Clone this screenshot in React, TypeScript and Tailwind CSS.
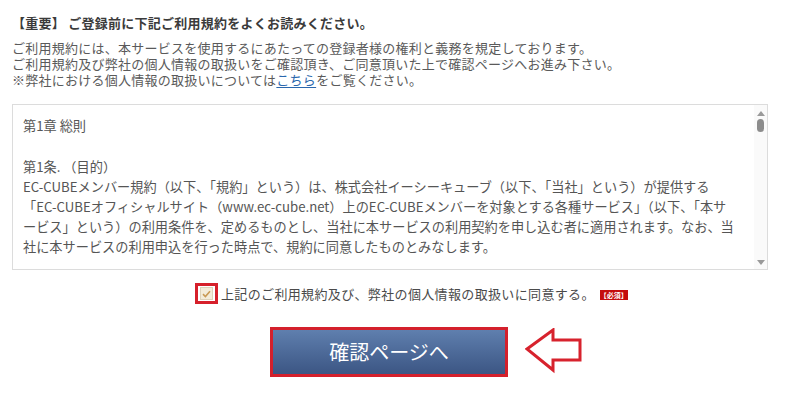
import React from 'react';

const font = { fontFamily: '"Noto Sans CJK JP", "Noto Sans", sans-serif' };

const termsLines = [
  'EC-CUBEメンバー規約（以下、「規約」という）は、株式会社イーシーキューブ（以下、「当社」という）が提供する',
  '「EC-CUBEオフィシャルサイト（www.ec-cube.net）上のEC-CUBEメンバーを対象とする各種サービス」（以下、「本サ',
  'ービス」という）の利用条件を、定めるものとし、当社に本サービスの利用契約を申し込む者に適用されます。なお、当',
  '社に本サービスの利用申込を行った時点で、規約に同意したものとみなします。',
];

const ArrowLeft: React.FC = () => (
  <svg width="58" height="46" viewBox="0 0 58 46" className="absolute left-full top-[1px] ml-[17px]">
    <polygon
      points="2,21 28,2 28,12 55,12 55,32 28,32 28,42"
      fill="white"
      stroke="#d7222d"
      strokeWidth="3"
    />
  </svg>
);

const App: React.FC = () => {
  return (
    <div className="w-[800px] h-[401px] bg-white overflow-hidden" style={font}>
      <div className="w-[756px] ml-[12px] pt-[15px] flex flex-col">
        {/* notice */}
        <h2 className="text-[13px] leading-[16px] font-bold tracking-[0.25px] text-[#3b3b3b]">
          【重要】 ご登録前に下記ご利用規約をよくお読みください。
        </h2>
        <div className="mt-[9px] text-[13px] leading-[16px] tracking-[0.25px] text-[#5a5a5a]">
          <p>ご利用規約には、本サービスを使用するにあたっての登録者様の権利と義務を規定しております。</p>
          <p>ご利用規約及び弊社の個人情報の取扱いをご確認頂き、ご同意頂いた上で確認ページへお進み下さい。</p>
          <p>
            ※弊社における個人情報の取扱いについては
            <a className="text-[#2a67ad] underline underline-offset-2">こちら</a>
            をご覧ください。
          </p>
        </div>

        {/* terms box */}
        <div className="mt-[16px] h-[166px] border border-[#dcdcdc] flex overflow-hidden">
          <div className="flex-1 pl-[10px] pt-[11px] text-[13.2px] leading-[20px] text-[#555] whitespace-nowrap overflow-hidden">
            <p>第1章 総則</p>
            <div className="mt-[21px]">
              <p>第1条. （目的）</p>
              {termsLines.map((line) => (
                <p key={line}>{line}</p>
              ))}
            </div>
          </div>
          <div className="w-[13px] bg-[#fafafa] flex flex-col items-center pt-[6px] pb-[4px]">
            <div className="w-0 h-0 border-l-[4px] border-r-[4px] border-b-[5px] border-l-transparent border-r-transparent border-b-[#9a9a9a]" />
            <div className="mt-[3px] w-[7px] h-[13px] rounded-full bg-[#8c8c8c]" />
            <div className="flex-1" />
            <div className="w-0 h-0 border-l-[4px] border-r-[4px] border-t-[5px] border-l-transparent border-r-transparent border-t-[#9a9a9a]" />
          </div>
        </div>

        {/* agreement */}
        <div className="mt-[13px] pl-[183px] flex items-center">
          <div className="w-[23px] h-[21px] border-[3px] border-[#d6202b] bg-white flex items-center justify-center">
            <div className="w-[13px] h-[13px] bg-[#f3ecda] border border-[#ddd3bb] flex items-center justify-center">
              <svg width="9" height="8" viewBox="0 0 9 8">
                <path d="M1 4.2 L3.4 6.5 L8 1.2" fill="none" stroke="#c99a55" strokeWidth="1.6" />
              </svg>
            </div>
          </div>
          <span className="ml-[3px] text-[13px] leading-[16px] tracking-[0.35px] text-[#4a4a4a]">
            上記のご利用規約及び、弊社の個人情報の取扱いに同意する。
          </span>
          <span className="ml-[5px] mt-[2px] h-[10px] w-[28px] bg-[#c40d0d] text-white text-[7px] leading-[10px] font-bold text-center">
            【必須】
          </span>
        </div>

        {/* submit */}
        <div className="mt-[23px] flex justify-center pr-[2px]">
          <div className="relative">
            <button className="w-[238px] h-[50px] border-[3px] border-[#d4202c] bg-gradient-to-b from-[#5f7fae] to-[#3c5684] text-white text-[20px] leading-none">
              確認ページへ
            </button>
            <ArrowLeft />
          </div>
        </div>
      </div>
    </div>
  );
};

export default App;
